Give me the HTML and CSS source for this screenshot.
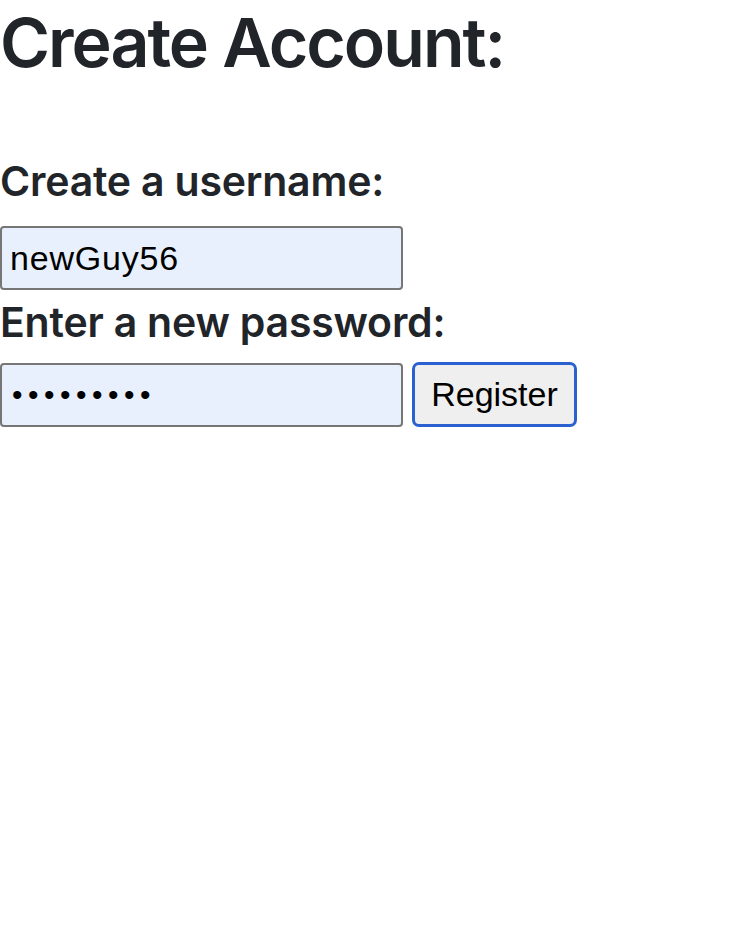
FILE: index.html
```html
<!DOCTYPE html>
<html lang="en">
<head>
<meta charset="utf-8">
<title>Create Account</title>
<link rel="stylesheet" href="styles.css">
</head>
<body>
<h1 class="title">Create Account:</h1>
<form class="form">
  <label class="label" for="username">Create a username:</label>
  <input class="field field-user" id="username" type="text" value="newGuy56">
  <label class="label label-pass" for="password">Enter a new password:</label>
  <div class="row">
    <input class="field field-pass" id="password" type="password" value="123456789">
    <button class="btn" type="button">Register</button>
  </div>
</form>
</body>
</html>
```
FILE: styles.css
```css
html, body {
  margin: 0;
  padding: 0;
  background: #ffffff;
}
body {
  font-family: Inter, "Liberation Sans", Arial, sans-serif;
  color: #212529;
}
.title {
  margin: 0 0 64px 0;
  font-size: 68px;
  line-height: 85px;
  font-weight: 600;
  letter-spacing: -2px;
}
.form {
  display: flex;
  flex-direction: column;
  align-items: flex-start;
  margin: 0;
}
.label {
  display: block;
  font-size: 41px;
  line-height: 64px;
  font-weight: 600;
  letter-spacing: -0.2px;
  margin: 0 0 13px 0;
}
.label-pass {
  margin: 0 0 9px 0;
}
.field {
  box-sizing: border-box;
  width: 403px;
  height: 64px;
  margin: 0;
  padding: 0 8px;
  border: 2px solid #767676;
  border-radius: 4px;
  background: #e8f0fe;
  color: #000000;
  font-family: "Liberation Sans", Arial, sans-serif;
  font-size: 34px;
  outline: none;
}
.field-user {
  letter-spacing: 0.8px;
}
.field-pass {
  font-size: 30px;
  letter-spacing: 5.5px;
  padding-left: 10px;
}
.row {
  display: flex;
  align-items: center;
  gap: 9px;
}
.btn {
  box-sizing: border-box;
  width: 165px;
  height: 65px;
  margin: -1px 0 0 0;
  padding: 0;
  border: 3px solid #2a60d0;
  border-radius: 7px;
  background: #efefef;
  color: #000000;
  font-family: "Liberation Sans", Arial, sans-serif;
  font-size: 34px;
}
```
